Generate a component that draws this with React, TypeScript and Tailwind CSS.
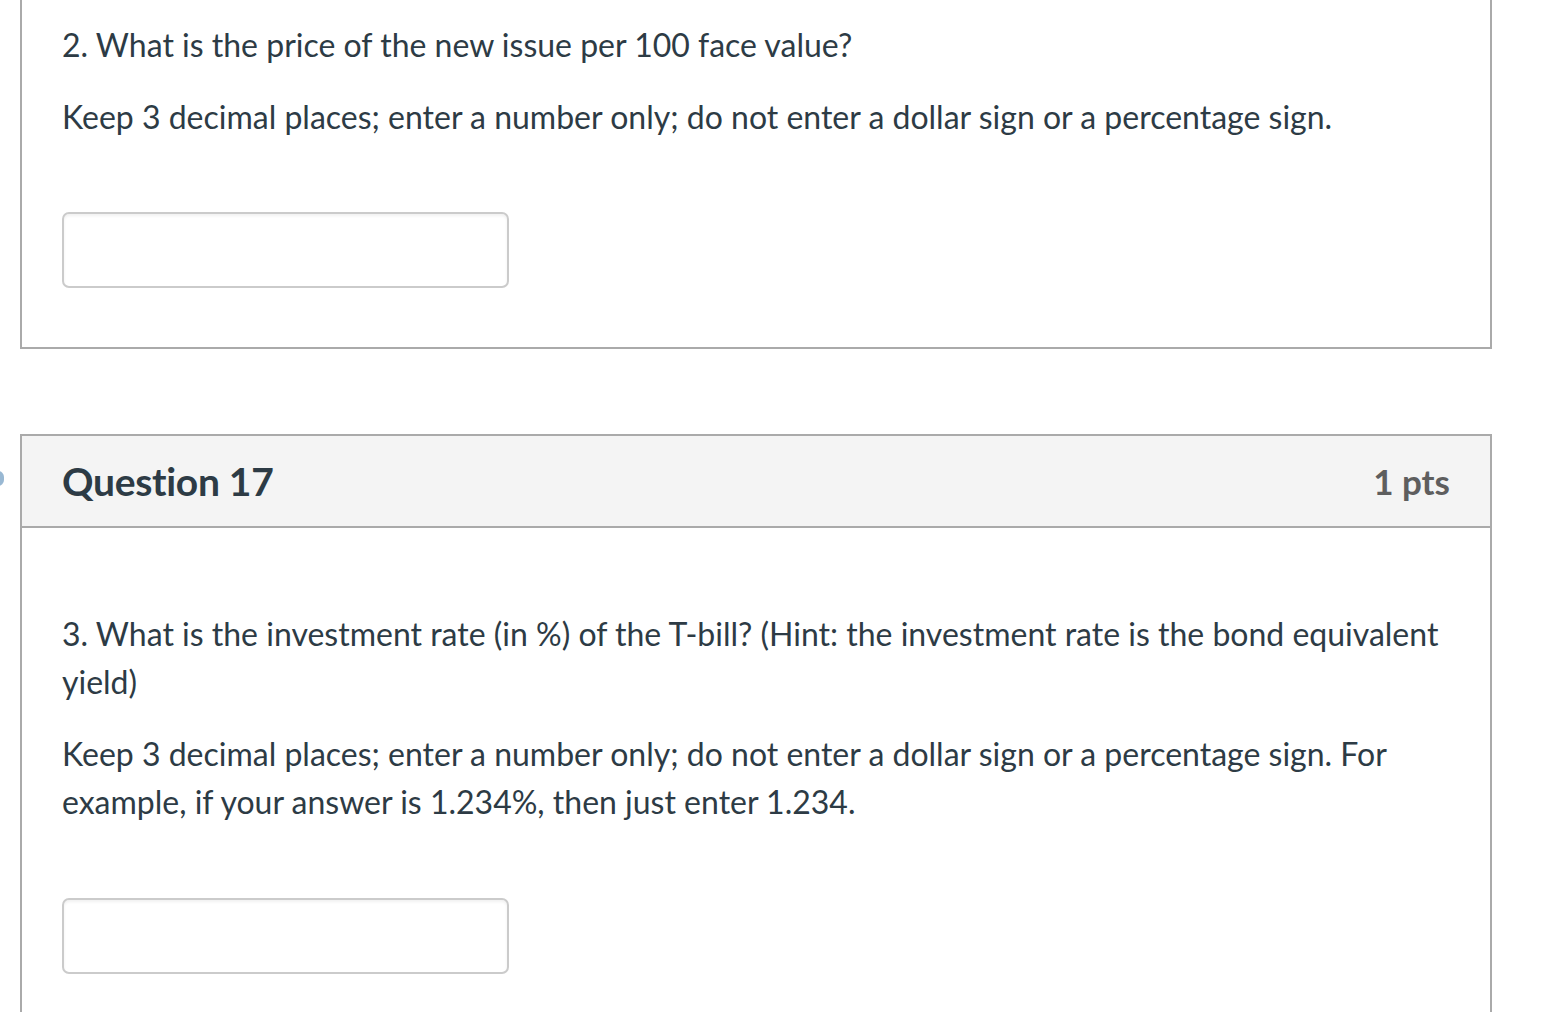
import React from "react";

const text = "text-[#2d3b45] text-[32px] leading-[48px]";

function AnswerBox() {
  return (
    <div className="w-[447px] h-[76px] rounded-[7px] border-2 border-[#cbcbcb] bg-white shadow-[inset_0_2px_3px_rgba(0,0,0,0.06)]" />
  );
}

export default function App() {
  return (
    <div
      className="relative w-[1546px] h-[1012px] overflow-hidden bg-white"
      style={{ fontFamily: "Lato, 'Open Sans', sans-serif" }}
    >
      <span className="absolute left-[-8px] top-[471px] w-[12px] h-[15px] rounded-full bg-[#7fa6c8] opacity-80" />
      <div className="ml-[20px] w-[1472px] mt-[-30px]">
        {/* Card 1 (top cut off) */}
        <div className="border-2 border-[#aaaaaa] pl-[40px] pr-[40px] pt-[49px] pb-[59px]">
          <p className={text}>2. What is the price of the new issue per 100 face value?</p>
          <p className={`${text} mt-[24px]`}>
            Keep 3 decimal places; enter a number only; do not enter a dollar sign or a percentage sign.
          </p>
          <div className="mt-[71px]">
            <AnswerBox />
          </div>
        </div>

        {/* Card 2 */}
        <div className="mt-[85px] border-2 border-[#aaaaaa]">
          <div className="h-[92px] bg-[#f4f4f4] border-b-2 border-[#aaaaaa] flex items-center justify-between pl-[40px] pr-[40px]">
            <h2 className="text-[#2d3b45] text-[39px] font-bold tracking-[-0.3px]">Question 17</h2>
            <span className="text-[#5e5e5e] text-[35px] font-bold">1 pts</span>
          </div>
          <div className="pl-[40px] pr-[40px] pt-[82px] pb-[120px]">
            <p className={text}>
              3. What is the investment rate (in %) of the T-bill? (Hint: the investment rate is the bond equivalent yield)
            </p>
            <p className={`${text} mt-[24px]`}>
              Keep 3 decimal places; enter a number only; do not enter a dollar sign or a percentage sign. For example, if your answer is 1.234%, then just enter 1.234.
            </p>
            <div className="mt-[72px]">
              <AnswerBox />
            </div>
          </div>
        </div>
      </div>
    </div>
  );
}
